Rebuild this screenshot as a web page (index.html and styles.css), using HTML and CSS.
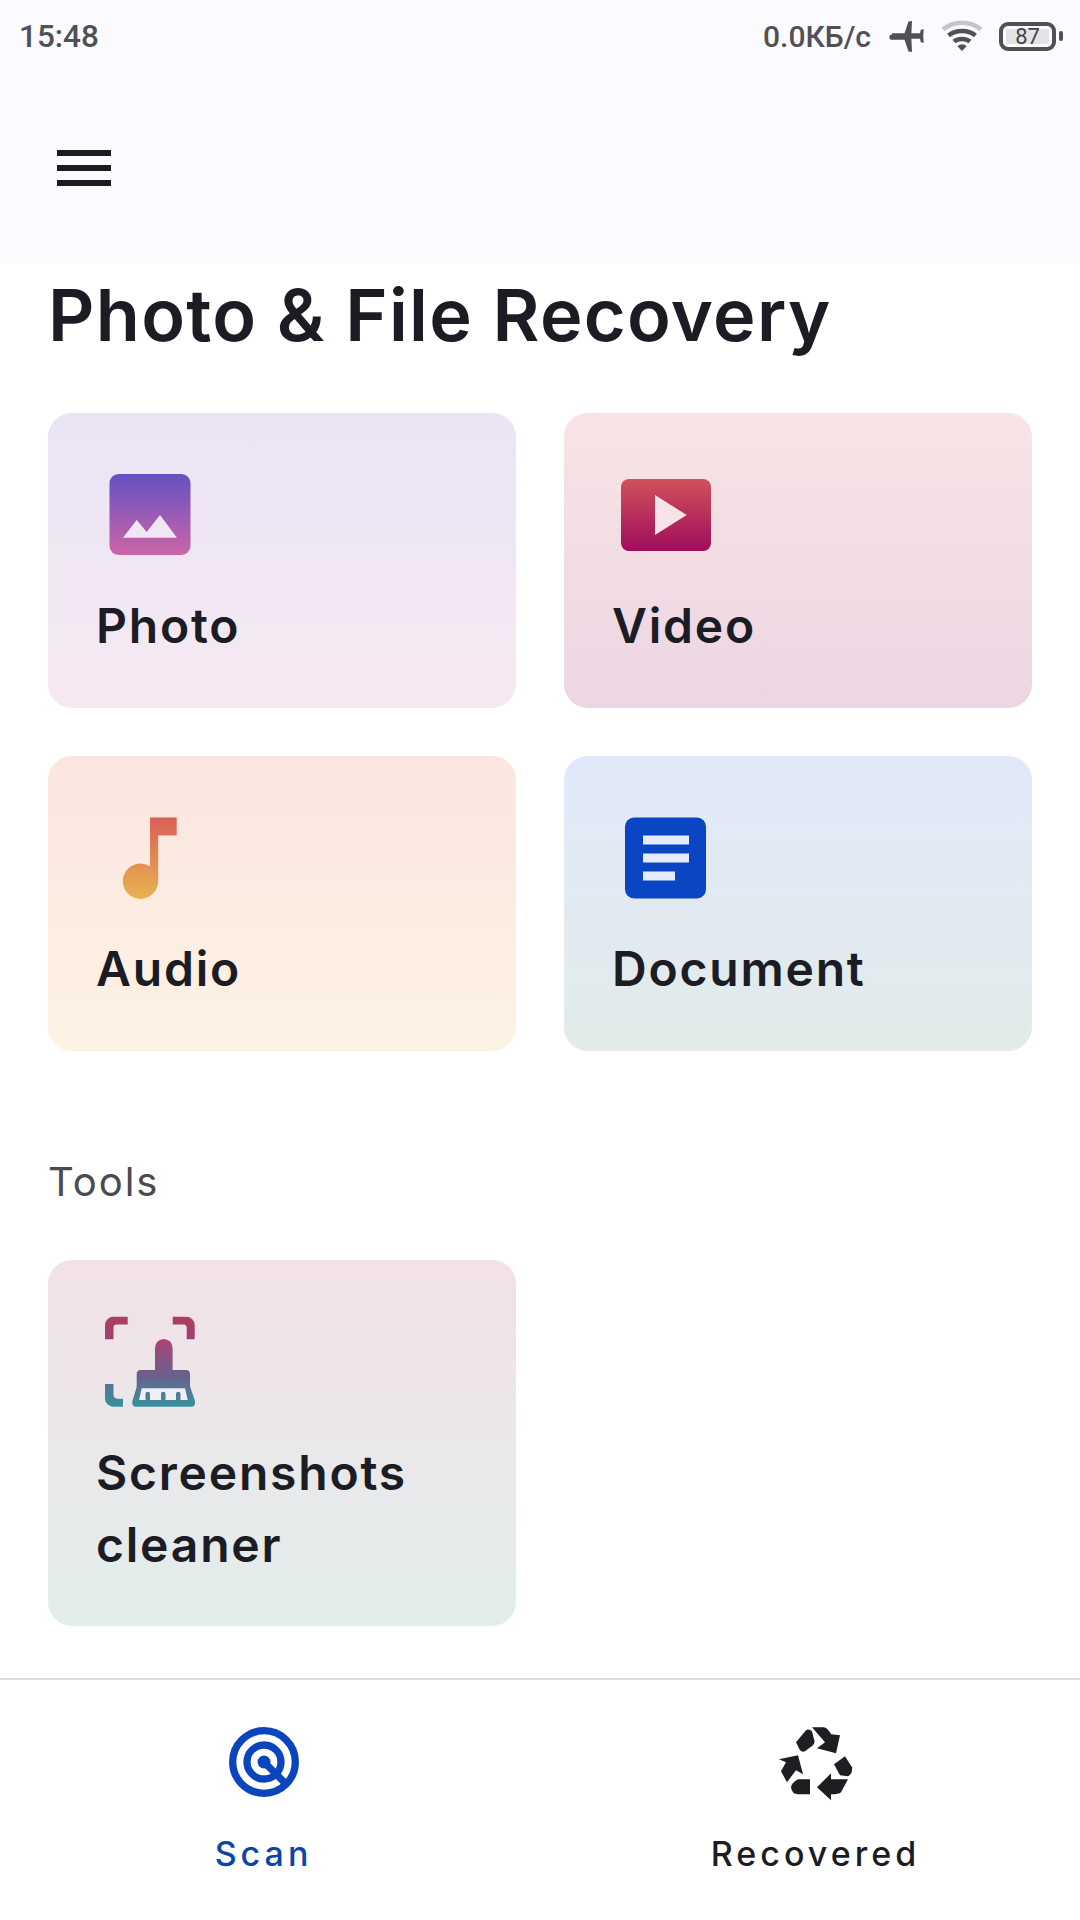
FILE: index.html
```html
<!DOCTYPE html>
<html lang="en">
<head>
<meta charset="utf-8">
<title>Photo &amp; File Recovery</title>
<link rel="stylesheet" href="styles.css">
</head>
<body>
<div class="screen">
  <header class="top">
    <div class="status">
      <span class="time">15:48</span>
      <div class="status-right">
        <span class="speed">0.0КБ/с</span>
        <svg class="plane" viewBox="0 0 36 32"><path d="M3 13.2h12.5L19.5 1.5 23 1l-.6 12.2 8.6 0 .9-3.6h2.9l-.6 6.4.6 6.4h-2.9l-.9-3.6-8.6 0 .6 13.2-3.5-.6-4-11.6H3a2.6 2.6 0 0 1 0-5.2z"/></svg>
        <svg class="wifi" viewBox="0 0 42 32"><path class="wifi-far" d="M2 9.5C13 .5 29 .5 40 9.5" /><path class="wifi-near" d="M7.500 15.500C15 9.500 27 9.500 34.500 15.500M13 21.500C17.500 18 24.500 18 29 21.500"/><path class="wifi-dot" d="M21 31l-4.600-4.800a6.500 6.500 0 0 1 9.200 0z"/></svg>
        <div class="battery">
          <div class="battery-body"><span class="battery-level">87</span></div>
          <i class="battery-cap"></i>
        </div>
      </div>
    </div>
    <button class="menu" aria-label="Menu"><i></i><i></i><i></i></button>
  </header>
  <main class="content">
    <h1 class="title">Photo &amp; File Recovery</h1>
    <section class="grid">
      <a class="card card-photo">
        <svg class="icon" viewBox="0 0 108 108">
          <defs><linearGradient id="gp" x1="0" y1="0" x2="0" y2="1"><stop offset="0" stop-color="#6650c2"/><stop offset="1" stop-color="#cb65a8"/></linearGradient></defs>
          <rect x="13.500" y="13" width="81" height="81" rx="9" fill="url(#gp)"/>
          <path d="M27 76.700L40.700 59 50.700 71 64 54 81 76.700z" fill="#f0e6f4"/>
        </svg>
        <span class="label">Photo</span>
      </a>
      <a class="card card-video">
        <svg class="icon" viewBox="0 0 108 108">
          <defs><linearGradient id="gv" x1="0" y1="0" x2="0" y2="1"><stop offset="0" stop-color="#d0525a"/><stop offset="1" stop-color="#9f0c5c"/></linearGradient></defs>
          <rect x="9" y="18" width="90" height="72" rx="8" fill="url(#gv)"/>
          <path d="M43 34V74L74.700 54z" fill="#f8e4e8"/>
        </svg>
        <span class="label">Video</span>
      </a>
      <a class="card card-audio">
        <svg class="icon" viewBox="0 0 108 108">
          <defs><linearGradient id="ga" x1="0" y1="0" x2="0" y2="1"><stop offset="0" stop-color="#da5f58"/><stop offset="1" stop-color="#e8b44f"/></linearGradient></defs>
          <path d="M54 13.500H80.700V31.500H62.200V77.200A17.700 17.700 0 1 1 54 62.300z" fill="url(#ga)"/>
        </svg>
        <span class="label">Audio</span>
      </a>
      <a class="card card-doc">
        <svg class="icon" viewBox="0 0 108 108">
          <rect x="13" y="13.500" width="81" height="81" rx="9" fill="#0a45c4"/>
          <path d="M31 31.500H77V40.500H31zM31 49.500H77V58.500H31zM31 67.500H63V76.500H31z" fill="#e4ecfb"/>
        </svg>
        <span class="label">Document</span>
      </a>
    </section>
    <h2 class="section-title">Tools</h2>
    <section class="grid">
      <a class="card card-clean">
        <svg class="icon" viewBox="0 0 108 108">
          <defs>
            <linearGradient id="gc" gradientUnits="userSpaceOnUse" x1="0" y1="9" x2="0" y2="99"><stop offset="0" stop-color="#b03c62"/><stop offset="0.4" stop-color="#8a4c7a"/><stop offset="1" stop-color="#3592a0"/></linearGradient>
            <linearGradient id="gb" gradientUnits="userSpaceOnUse" x1="0" y1="31" x2="0" y2="99"><stop offset="0" stop-color="#ab4472"/><stop offset="0.55" stop-color="#68608e"/><stop offset="1" stop-color="#37929f"/></linearGradient>
          </defs>
          <path fill="url(#gc)" d="M31.700 8.700V16.500H20A3 3 0 0 0 17.500 19V31.300H9V17A8.300 8.300 0 0 1 17.300 8.700zM76.700 8.700H90.400A8.300 8.300 0 0 1 98.700 17V31.300H90.700V19A3 3 0 0 0 88 16.500H76.700zM9 76H17.500V86A4 4 0 0 0 21.500 90.700H27V98.700H17.300A8.300 8.300 0 0 1 9 90.400z"/>
          <path fill="url(#gb)" d="M59 62V39.800A8.800 8.800 0 0 1 76.600 39.800V62H90A4 4 0 0 1 94 66V78C95 82 98 89 99 93.500V95A3.700 3.700 0 0 1 95.300 98.700H40A3.700 3.700 0 0 1 36.300 95V93.500C37.500 89 40 82 40.700 78V66A4 4 0 0 1 44.700 62z"/>
          <path fill="#f1eff2" d="M45.700 80.300H89L91.700 92H43z"/>
          <path fill="url(#gb)" d="M49.500 92V85.900A2.250 2.250 0 0 1 54 85.900V92zM65 92V85.900A2.250 2.250 0 0 1 69.500 85.900V92zM80 92V85.900A2.250 2.250 0 0 1 84.500 85.900V92z"/>
        </svg>
        <span class="label">Screenshots<br>cleaner</span>
      </a>
    </section>
  </main>
  <nav class="tabs">
    <a class="tab tab-active">
      <svg class="tab-icon" viewBox="0 0 80 80">
        <g fill="none" stroke="#0a45bd" stroke-width="7.300">
          <circle cx="40" cy="40" r="31.300"/>
          <circle cx="40" cy="40" r="17"/>
          <path d="M40 40L60 60"/>
        </g>
        <circle cx="40" cy="40" r="6.500" fill="#0a45bd"/>
      </svg>
      <span class="tab-label">Scan</span>
    </a>
    <a class="tab">
      <svg class="tab-icon" viewBox="25 22.700 80 80">
        <g fill="#1d1d22">
          <path d="M45 43L55 31Q58 29 61 32L63 40 H63L63.500 41Q64 43 62 46L54 52Q51 53 49 51z"/>
          <path d="M61 28H73Q77 29 80 35L89 36L85 54L66 49L74 43z"/>
          <path d="M94 57L101 68Q102 74 97 77L89 76L83 65z"/>
          <path d="M97 80L90 93Q88 95 80 95V101L66 88L80 74V80z"/>
          <path d="M59 80H47Q40 84 40 88Q41 95 47 95H59z"/>
          <path d="M28 60L47 56L52 75L45 71L36 83L30 72L35 63z"/>
        </g>
      </svg>
      <span class="tab-label">Recovered</span>
    </a>
  </nav>
</div>
</body>
</html>
```

FILE: styles.css
```css
* { box-sizing: border-box; }
html, body { margin: 0; padding: 0; background: #fff; }
body { font-family: "Inter", "Liberation Sans", sans-serif; color: #1c1c24; }
.screen { width: 1080px; height: 1920px; display: flex; flex-direction: column; overflow: hidden; }

.top { height: 264px; background: #fbfaff; flex: none; }
.status { height: 72px; display: flex; align-items: center; justify-content: space-between; padding: 0 17px 0 19px; font-family: "Roboto", sans-serif; font-weight: 500; font-size: 30px; color: #505055; }
.time { font-size: 31.500px; }
.status-right { display: flex; align-items: center; }
.speed { margin-right: 18px; }
.plane { width: 36px; height: 32px; fill: #505055; margin-right: 16px; }
.wifi { width: 42px; height: 32px; margin-right: 16px; }
.wifi-far, .wifi-near { fill: none; stroke-width: 4.500px; }
.wifi-far { stroke: #c6c6c8; }
.wifi-near { stroke: #505055; }
.wifi-dot { fill: #505055; }
.battery { display: flex; align-items: center; gap: 3px; }
.battery-body { width: 57px; height: 29px; border: 4px solid #505055; border-radius: 9px; padding: 3px; display: flex; }
.battery-level { flex: 1; background: #e3e3e6; border-radius: 2px; font-weight: 400; font-size: 22px; line-height: 15px; text-align: center; color: #444; }
.battery-cap { width: 4px; height: 10px; border-radius: 2px; background: #505055; }

.menu { display: flex; flex-direction: column; gap: 9px; border: 0; padding: 0; background: none; margin: 78px 0 0 57px; width: 54px; }
.menu i { display: block; height: 6px; background: #1c1b22; }

.content { flex: 1; padding: 0 48px; }
.title { margin: 8px 0 0; font-size: 72px; line-height: 86px; font-weight: 600; letter-spacing: 1.300px; color: #1c1c24; white-space: nowrap; }
.grid { display: grid; grid-template-columns: 468px 468px; gap: 48px; margin-top: 55px; }
.section-title + .grid { margin-top: 56px; }
.card { display: block; border-radius: 24px; padding: 48px 48px 0; height: 295px; }
.icon { display: block; width: 108px; height: 108px; }
.label { display: block; font-size: 48px; line-height: 72px; font-weight: 600; margin-top: 21px; letter-spacing: 1.800px; color: #1c1c24; }
.card-photo { background: linear-gradient(#e9e4f5, #f7e9f2); }
.card-video { background: linear-gradient(#f8e3e5, #ecd6e3); }
.card-audio { background: linear-gradient(#fbe5e0, #fdf3e4); }
.card-doc { background: linear-gradient(#e1e9f9, #e2ebe9); }
.card-clean { background: linear-gradient(#f2e1e7, #e2eeec); height: 366px; }
.section-title { margin: 109px 0 0; font-size: 40px; line-height: 44px; font-weight: 400; color: #4a4a52; letter-spacing: 2px; }

.tabs { flex: none; height: 242px; border-top: 2px solid #dcdcdc; display: flex; justify-content: space-between; padding: 0 144.500px 0 143.500px; }
.tab { width: 240px; display: flex; flex-direction: column; align-items: center; }
.tab-icon { width: 80px; height: 80px; margin-top: 42px; }
.tab-active .tab-label { color: #0a45a8; }
.tab-label { font-weight: 500; font-size: 34px; line-height: 44px; letter-spacing: 4px; margin-top: 30px; color: #1c1c24; white-space: nowrap; }
```
